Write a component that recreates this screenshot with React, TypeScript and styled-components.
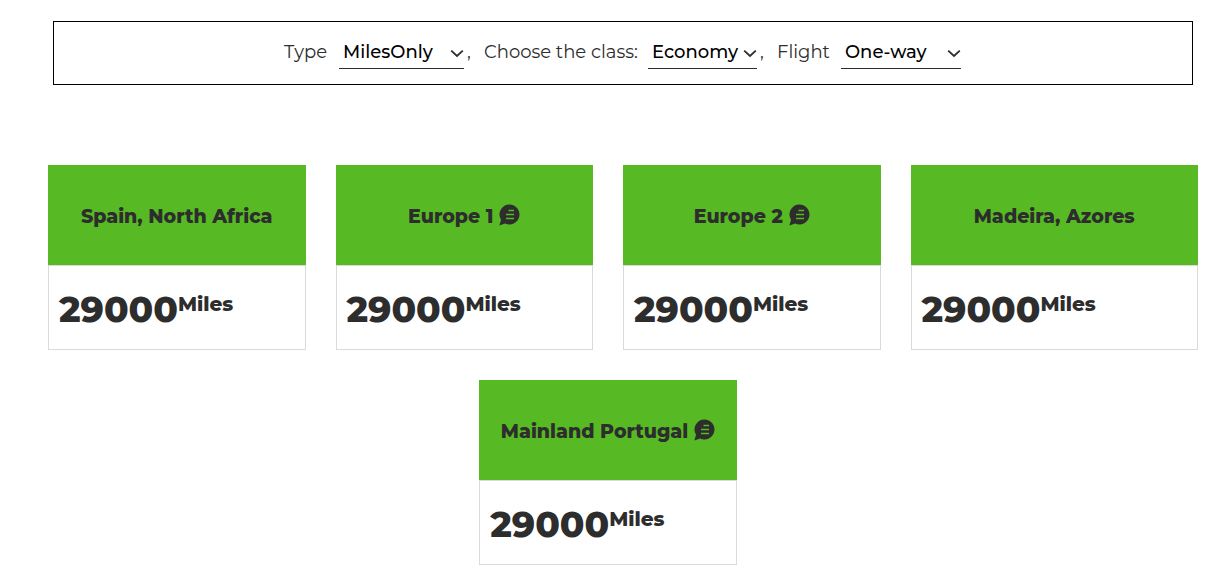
import React from "react";
import styled, { createGlobalStyle } from "styled-components";

const ink = "#2d2d2d";

const GlobalStyle = createGlobalStyle`
  *, *::before, *::after { box-sizing: border-box; }
  body {
    margin: 0;
    background: #fff;
    color: ${ink};
    font-family: Montserrat, Inter, "Liberation Sans", sans-serif;
  }
`;

const Page = styled.main`
  padding: 21px 13px 0 48px;
`;

const FilterBar = styled.form`
  display: flex;
  flex-wrap: wrap;
  justify-content: center;
  margin: 0 5px 80px;
  padding: 14px 1px 15px 0;
  border: 1px solid #000;
  font-size: 18px;
  line-height: 32px;
`;

const Field = styled.div`
  display: flex;
`;

const FieldLabel = styled.label<{ $width: number }>`
  width: ${(p) => p.$width}px;
  white-space: nowrap;
`;

const Comma = styled.span`
  width: 20px;
  padding-left: 3px;
`;

const SelectBox = styled.div<{ $width: number }>`
  position: relative;
  width: ${(p) => p.$width}px;
  border-bottom: 1px solid ${ink};
`;

const Select = styled.select`
  display: block;
  width: 100%;
  height: 32px;
  padding: 0 16px 0 4px;
  border: 0;
  border-radius: 0;
  background: transparent;
  color: #000;
  font-family: inherit;
  font-size: 18px;
  font-weight: 500;
  line-height: 32px;
  appearance: none;
`;

const Chevron = styled.svg`
  position: absolute;
  top: 13px;
  right: 0;
  width: 14px;
  height: 9px;
  pointer-events: none;
`;

const Fares = styled.ul`
  display: flex;
  flex-wrap: wrap;
  justify-content: center;
  margin: 0;
  padding: 0;
  list-style: none;
`;

const Fare = styled.li`
  width: 25%;
  padding-right: 30px;
  margin-bottom: 30px;

  &:nth-child(4n) {
    padding-right: 0;
  }

  &:last-child {
    margin-bottom: 0;
  }
`;

const FareHeader = styled.header`
  display: flex;
  align-items: center;
  justify-content: center;
  gap: 6px;
  height: 100px;
  background: #57ba24;
`;

const FareTitle = styled.h2`
  margin: 0;
  padding-top: 3px;
  font-size: 19px;
  font-weight: 800;
  line-height: 24px;
  white-space: nowrap;
`;

const NoteButton = styled.button`
  display: flex;
  padding: 0;
  border: 0;
  background: none;
  color: inherit;
  cursor: pointer;
`;

const FareBody = styled.p`
  height: 85px;
  margin: 0;
  padding: 19px 10px;
  border: 1px solid #dadada;
  font-size: 36px;
  font-weight: 800;
  line-height: 48px;
  white-space: nowrap;
`;

const Unit = styled.sup`
  font-size: 20px;
  font-weight: 800;
  line-height: 20px;
  vertical-align: 11px;
`;

type FilterProps = {
  id: string;
  label: string;
  labelWidth: number;
  width: number;
  options: string[];
  last?: boolean;
};

function Filter({ id, label, labelWidth, width, options, last }: FilterProps) {
  return (
    <Field>
      <FieldLabel htmlFor={id} $width={labelWidth}>
        {label}
      </FieldLabel>
      <SelectBox $width={width}>
        <Select id={id}>
          {options.map((o) => (
            <option key={o}>{o}</option>
          ))}
        </Select>
        <Chevron viewBox="0 0 14 9" fill="none" aria-hidden="true">
          <path d="M1.2 1.6 L7 7 L12.8 1.6" stroke={ink} strokeWidth="1.8" />
        </Chevron>
      </SelectBox>
      {!last && <Comma>,</Comma>}
    </Field>
  );
}

function NoteIcon() {
  return (
    <svg width="21" height="22" viewBox="0 0 21 22" aria-hidden="true">
      <path
        fill="currentColor"
        d="M10.5 0.5a10 10 0 1 1-4.4 19L0.4 21.4 2 15.7A10 10 0 0 1 10.5 0.5z"
      />
      <path stroke="#57ba24" strokeWidth="1.4" d="M9.5 6.5h5.5M7 10.5h8M7 14.5h8" />
    </svg>
  );
}

const fares = [
  { zone: "Spain, North Africa", miles: 29000, note: false },
  { zone: "Europe 1", miles: 29000, note: true },
  { zone: "Europe 2", miles: 29000, note: true },
  { zone: "Madeira, Azores", miles: 29000, note: false },
  { zone: "Mainland Portugal", miles: 29000, note: true },
];

export default function App() {
  return (
    <Page>
      <GlobalStyle />
      <FilterBar>
        <Filter id="type" label="Type" labelWidth={55} width={125} options={["MilesOnly"]} />
        <Filter id="class" label="Choose the class:" labelWidth={164} width={109} options={["Economy"]} />
        <Filter id="flight" label="Flight" labelWidth={64} width={120} options={["One-way"]} last />
      </FilterBar>
      <Fares>
        {fares.map((fare) => (
          <Fare key={fare.zone}>
            <FareHeader>
              <FareTitle>{fare.zone}</FareTitle>
              {fare.note && (
                <NoteButton type="button" aria-label={`About ${fare.zone}`}>
                  <NoteIcon />
                </NoteButton>
              )}
            </FareHeader>
            <FareBody>
              {fare.miles}
              <Unit>Miles</Unit>
            </FareBody>
          </Fare>
        ))}
      </Fares>
    </Page>
  );
}
